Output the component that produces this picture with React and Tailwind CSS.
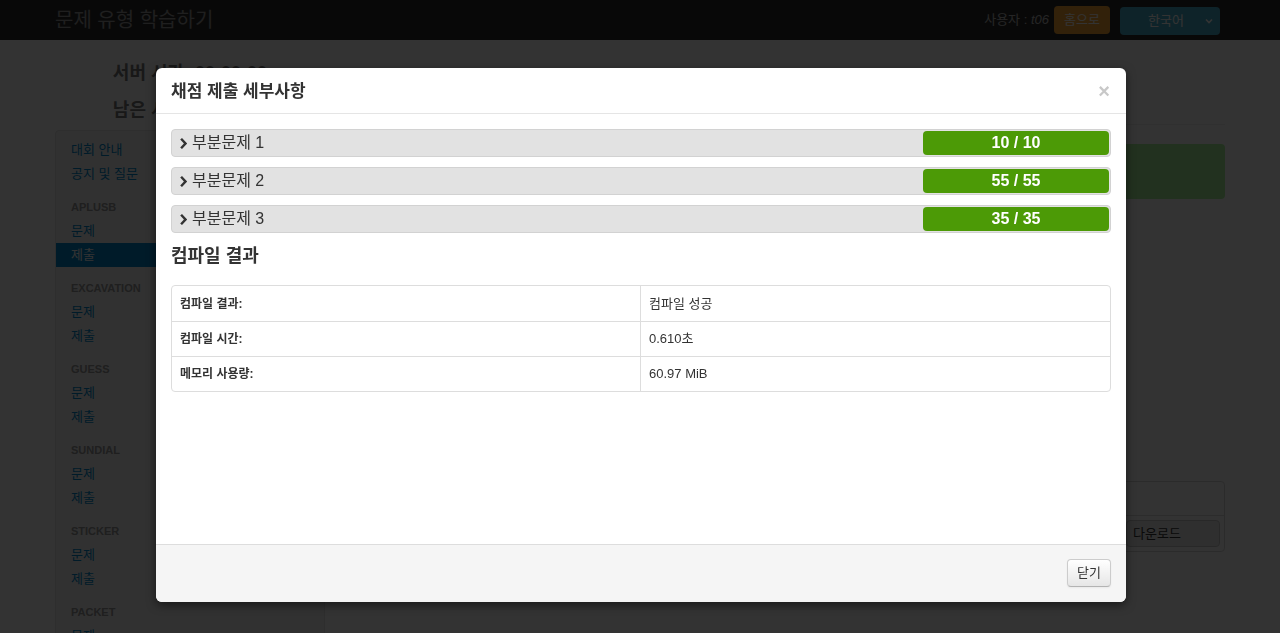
import React from "react";

const FONT = { fontFamily: '"Liberation Sans", "Noto Sans CJK KR", sans-serif' };

function Chevron() {
  return (
    <svg width="9" height="11" viewBox="0 0 9 11" className="shrink-0">
      <path d="M1.2 1.6 L3 0 L8.2 5.5 L3 11 L1.2 9.4 L4.9 5.5 Z" fill="#333" />
    </svg>
  );
}

function NavLink({ children, active }) {
  return (
    <div
      className={
        "h-6 leading-6 px-[15px] text-[13px] " +
        (active ? "bg-[#0088cc] text-white" : "text-[#0088cc]")
      }
    >
      {children}
    </div>
  );
}

function NavHeader({ children }) {
  return (
    <div className="mt-[10px] h-[23px] leading-[23px] px-[15px] text-[11px] font-bold uppercase text-[#999]">
      {children}
    </div>
  );
}

const tasks = ["APLUSB", "EXCAVATION", "GUESS", "SUNDIAL", "STICKER", "PACKET"];

const subtasks = [
  { name: "부분문제 1", score: "10 / 10" },
  { name: "부분문제 2", score: "55 / 55" },
  { name: "부분문제 3", score: "35 / 35" },
];

const compile = [
  ["컴파일 결과:", "컴파일 성공"],
  ["컴파일 시간:", "0.610초"],
  ["메모리 사용량:", "60.97 MiB"],
];

export default function App() {
  return (
    <div className="relative h-[633px] overflow-hidden bg-white text-[#333]" style={FONT}>
      {/* top navigation bar */}
      <nav className="h-10 bg-[#2c2c2c]">
        <div className="w-[1170px] mx-auto h-full flex items-center justify-between">
          <div className="text-[20px] text-[#999] leading-10">문제 유형 학습하기</div>
          <div className="flex items-center mr-[5px]">
            <span className="text-[13px] text-[#bbb] mr-[5px]">
              사용자 : <i>t06</i>
            </span>
            <button className="h-7 w-14 rounded-[4px] bg-[#faa732] text-white text-[13px]">홈으로</button>
            <div className="ml-[10px] h-7 w-[100px] mt-[1px] rounded-[4px] bg-[#49afcd] text-white text-[13px] flex items-center">
              <span className="flex-1 text-center pl-[8px]">한국어</span>
              <svg width="10" height="10" viewBox="0 0 10 10" className="mr-[6px]">
                <path d="M2 3.5 L5 6.5 L8 3.5" stroke="#fff" strokeWidth="1.6" fill="none" />
              </svg>
            </div>
          </div>
        </div>
      </nav>

      {/* page body */}
      <div className="w-[1170px] mx-auto flex gap-[30px]">
        <aside className="w-[270px] shrink-0">
          <div className="text-center text-[18px] font-bold text-[#777] mt-[21px] leading-[25px]">서버 시간: 00:00:00</div>
          <div className="text-center text-[18px] font-bold text-[#777] mt-[12px] leading-[25px]">남은 시간: 00:00:00</div>
          <div className="mt-[7px] bg-[#f5f5f5] border border-[#e3e3e3] rounded-[4px] pt-[7px] pb-4">
            <NavLink>대회 안내</NavLink>
            <NavLink>공지 및 질문</NavLink>
            {tasks.map((t, i) => (
              <div key={t}>
                <NavHeader>{t}</NavHeader>
                <NavLink>문제</NavLink>
                <NavLink active={i === 0}>제출</NavLink>
              </div>
            ))}
          </div>
        </aside>

        <main className="flex-1 pt-[84px]">
          <div className="border-b border-[#f0f0f0]" />
          <div className="mt-[19px] h-[55px] rounded-[4px] bg-[#aaf59c]" />
          <div className="mt-[282px] border border-[#d8d8d8] rounded-[4px]">
            <div className="h-[34px] border-b border-[#ddd]" />
            <div className="h-[35px] flex items-center justify-end pr-[4px]">
              <button className="h-[27px] w-[94px] text-left pl-[6px] text-[13px] bg-[#eaeaea] border border-[#c8c8c8] rounded-[4px]">
                다운로드
              </button>
            </div>
          </div>
        </main>
      </div>

      {/* dim backdrop */}
      <div className="fixed inset-0 bg-black/80" />

      {/* submission details dialog */}
      <div className="absolute left-[156px] top-[68px] w-[970px] bg-white rounded-[6px] shadow-[0_3px_10px_rgba(0,0,0,0.5)] overflow-hidden">
        <div className="h-[46px] px-[15px] flex items-center justify-between border-b border-[#e5e5e5]">
          <h3 className="text-[17px] font-bold text-[#333] pt-[2px]">채점 제출 세부사항</h3>
          <span className="text-[20px] font-bold text-[#c8c8c8] leading-none mr-[1px] mt-[1px]">×</span>
        </div>

        <div className="h-[430px] px-[15px] pt-[15px]">
          <div className="flex flex-col gap-[10px]">
            {subtasks.map((s) => (
              <div
                key={s.name}
                className="h-[28px] bg-[#e2e2e2] border border-[#d2d2d2] rounded-[4px] flex items-center"
              >
                <div className="flex-1 flex items-center gap-[4px] pl-[7px] text-[16px] text-[#333]">
                  <Chevron />
                  <span>{s.name}</span>
                </div>
                <div className="w-[186px] h-[24px] mr-[1px] rounded-[4px] bg-[#4c9a06] text-white text-[16px] font-bold flex items-center justify-center">
                  {s.score}
                </div>
              </div>
            ))}
          </div>

          <h4 className="mt-[12px] h-[22px] leading-[22px] text-[18px] font-bold text-[#333]">컴파일 결과</h4>

          <div className="mt-[18px] border border-[#ddd] rounded-[4px]">
            {compile.map(([k, v], i) => (
              <div key={k} className={"flex h-[35px] " + (i > 0 ? "border-t border-[#ddd]" : "")}>
                <div className="w-1/2 border-r border-[#ddd] px-[8px] flex items-center text-[12px] font-bold text-[#333]">
                  {k}
                </div>
                <div className="w-1/2 px-[8px] flex items-center text-[13px] text-[#333]">{v}</div>
              </div>
            ))}
          </div>
        </div>

        <div className="h-[58px] bg-[#f5f5f5] border-t border-[#ddd] px-[15px] flex items-center justify-end">
          <button className="h-[28px] w-[44px] -mt-[1px] rounded-[4px] border border-[#ccc] border-b-[#b3b3b3] bg-gradient-to-b from-white to-[#e6e6e6] text-[13px] text-[#333] shadow-[inset_0_1px_0_rgba(255,255,255,0.2),0_1px_2px_rgba(0,0,0,0.05)]">
            닫기
          </button>
        </div>
      </div>
    </div>
  );
}
